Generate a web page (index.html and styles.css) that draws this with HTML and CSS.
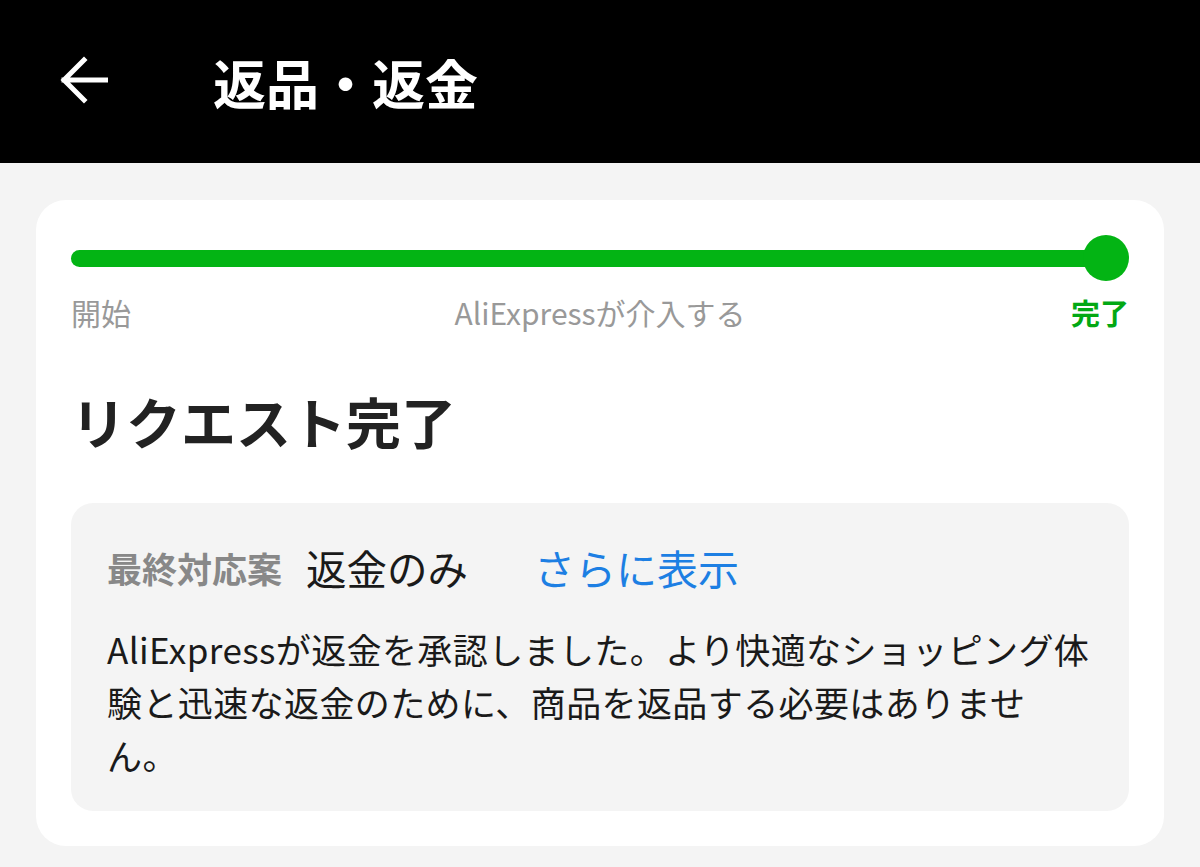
FILE: index.html
```html
<!DOCTYPE html>
<html lang="ja">
<head>
<meta charset="utf-8">
<title>返品・返金</title>
<link rel="stylesheet" href="styles.css">
</head>
<body>
<header class="topbar">
  <svg class="back" viewBox="0 0 48 48" width="48" height="48" aria-hidden="true">
    <path d="M46 24 H4 M24 4 L4 24 L24 44" fill="none" stroke="#fff" stroke-width="5" stroke-linecap="square" stroke-linejoin="miter"/>
  </svg>
  <h1 class="title">返品・返金</h1>
</header>
<main class="page">
  <section class="card">
    <div class="progress">
      <div class="track"></div>
      <div class="dot"></div>
    </div>
    <div class="steps">
      <span class="step step-start">開始</span>
      <span class="step step-mid">AliExpressが介入する</span>
      <span class="step step-end">完了</span>
    </div>
    <h2 class="status">リクエスト完了</h2>
    <div class="result">
      <div class="result-row">
        <span class="result-label">最終対応案</span>
        <span class="result-value">返金のみ</span>
        <a class="result-more" href="#">さらに表示</a>
      </div>
      <p class="result-text">AliExpressが返金を承認しました。より快適なショッピング体験と迅速な返金のために、商品を返品する必要はありません。</p>
    </div>
  </section>
</main>
</body>
</html>
```

FILE: styles.css
```css
* { box-sizing: border-box; }
html, body { margin: 0; padding: 0; }
body {
  width: 1200px;
  height: 867px;
  overflow: hidden;
  background: #f4f4f4;
  font-family: "Noto Sans CJK JP", "Noto Sans", sans-serif;
  color: #1a1a1a;
}
.topbar {
  height: 163px;
  background: #000;
  display: flex;
  align-items: center;
  padding-left: 60px;
}
.back { display: block; width: 48px; height: 48px; margin-top: -4px; }
.title {
  margin: 0 0 0 105px;
  color: #fff;
  font-size: 53px;
  font-weight: 700;
  line-height: 70px;
  letter-spacing: 0;
}
.page { padding: 37px 36px 0; }
.card {
  background: #fff;
  border-radius: 30px;
  padding: 35px 35px 35px;
}
.progress {
  height: 46px;
  display: flex;
  align-items: center;
}
.track {
  flex: 1;
  height: 17px;
  border-radius: 9px;
  background: #03b414;
}
.dot {
  width: 46px;
  height: 46px;
  border-radius: 50%;
  background: #03b414;
  margin-left: -22px;
}
.steps {
  margin-top: 11px;
  display: grid;
  grid-template-columns: 1fr auto 1fr;
  align-items: center;
  font-size: 30px;
  line-height: 40px;
  color: #999;
}
.step-start { justify-self: start; }
.step-mid { justify-self: center; }
.step-end { justify-self: end; color: #03a814; font-weight: 700; font-size: 29px; }
.status {
  margin: 53px 0 0;
  font-size: 55px;
  line-height: 70px;
  font-weight: 700;
  color: #222;
}
.result {
  margin-top: 48px;
  background: #f4f4f4;
  border-radius: 22px;
  padding: 36px 36px 30px;
}
.result-row {
  display: flex;
  align-items: center;
  height: 56px;
}
.result-label {
  font-size: 35px;
  font-weight: 700;
  color: #888;
}
.result-value {
  margin-left: 24px;
  font-size: 40.5px;
  color: #1a1a1a;
}
.result-more {
  margin-left: 66px;
  font-size: 41px;
  color: #1d7fe3;
  text-decoration: none;
}
.result-text {
  margin: 27px 0 0;
  font-size: 35px;
  line-height: 53px;
  color: #1a1a1a;
  letter-spacing: 0.4px;
}
```
